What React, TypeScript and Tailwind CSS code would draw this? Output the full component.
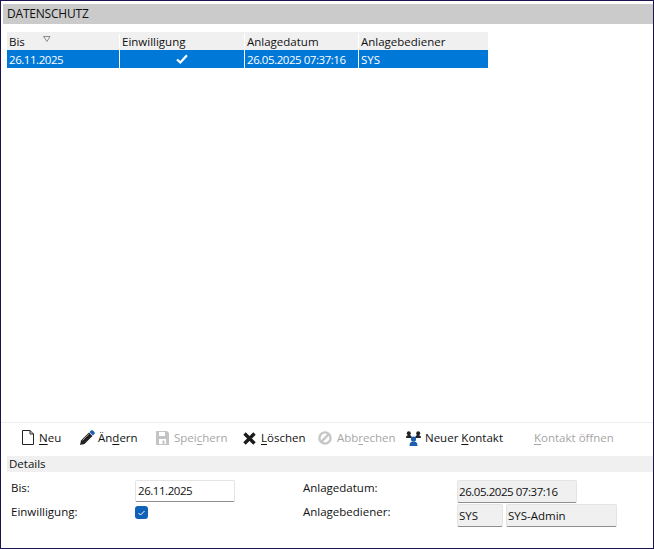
const font = "font-['Open_Sans','Noto_Sans',sans-serif]";
const dateText = "tracking-[-0.45px]";

const NewIcon = () => (
    <svg width="14" height="16" viewBox="0 0 14 16" fill="none">
        <path d="M1.5 .5H9L12.5 4V14.5H1.5Z M9 .5V4H12.5" fill="#fff" stroke="#222" strokeWidth="1" />
    </svg>
);

const PencilIcon = () => (
    <svg width="16" height="16" viewBox="0 0 16 16">
        <path d="M1 15L2 10.5L10 2.5L13.5 6L5.5 14Z" fill="#222" />
        <path d="M10.5 2L12 .6C12.6 0 13.3 0 13.9.6L15.4 2.1C16 2.7 16 3.4 15.4 4L14 5.5Z" fill="#1d5fae" />
        <path d="M3.5 10.5L10 4" stroke="#8f8f8f" strokeWidth="1" />
    </svg>
);

const SaveIcon = () => (
    <svg width="13" height="14" viewBox="0 0 13 14">
        <path d="M0 0H11L13 2V14H0Z" fill="#c4c4c4" />
        <path d="M3 1H9V5H3Z M3 8H10V13H3Z" fill="#fff" />
        <path d="M6.5 9.5H8.5V13H6.5Z" fill="#c4c4c4" />
    </svg>
);

const DeleteIcon = () => (
    <svg width="13" height="13" viewBox="0 0 13 13">
        <path d="M1.5 1.5L11.5 11.5M11.5 1.5L1.5 11.5" stroke="#1c1c1c" strokeWidth="3.4" />
    </svg>
);

const CancelIcon = () => (
    <svg width="14" height="14" viewBox="0 0 14 14" fill="none">
        <circle cx="7" cy="7" r="5.6" stroke="#c6c6c6" strokeWidth="2.4" />
        <path d="M3.2 10.8L10.8 3.2" stroke="#c6c6c6" strokeWidth="2.4" />
    </svg>
);

const ContactIcon = () => (
    <svg width="15" height="15" viewBox="0 0 15 15">
        <path d="M2.5 3L7.5 9L12.5 3" fill="none" stroke="#1d5fae" strokeWidth="1.2" />
        <circle cx="2.8" cy="2.2" r="2" fill="#222" />
        <circle cx="12.2" cy="2.2" r="2" fill="#222" />
        <path d="M0 7C0 5 1 4 2.8 4S5.5 5 5.5 7Z M9.5 7C9.5 5 10.5 4 12.2 4S15 5 15 7Z" fill="#222" />
        <circle cx="7.5" cy="8" r="2.6" fill="#1d5fae" />
        <path d="M3.5 15C3.5 11.5 5 10.4 7.5 10.4S11.5 11.5 11.5 15Z" fill="#1d5fae" />
    </svg>
);

const Key = ({ before, k, after }: { before?: string; k: string; after?: string }) => (
    <span>
        {before}
        <span className="underline underline-offset-2">{k}</span>
        {after}
    </span>
);

const tools = [
    { icon: <NewIcon />, before: "", k: "N", after: "eu", cls: "w-[58px] gap-[4px] text-[#111]" },
    { icon: <PencilIcon />, before: "Än", k: "d", after: "ern", cls: "w-[77px] gap-[3px] text-[#111]" },
    { icon: <SaveIcon />, before: "Spei", k: "c", after: "hern", cls: "w-[87px] gap-[5px] text-[#a6a6a6]" },
    { icon: <DeleteIcon />, before: "", k: "L", after: "öschen", cls: "w-[75px] gap-[5px] text-[#111]" },
    { icon: <CancelIcon />, before: "Abb", k: "r", after: "echen", cls: "w-[88px] gap-[5px] text-[#a6a6a6]" },
    { icon: <ContactIcon />, before: "Neuer ", k: "K", after: "ontakt", cls: "w-[128px] gap-1 text-[#111]" },
    { icon: null, before: "", k: "K", after: "ontakt öffnen", cls: "text-[#a6a6a6]" },
];

const Field = ({ value, className }: { value: string; className: string }) => (
    <div className={`h-[23px] flex items-center px-[1px] bg-[#f0f0f0] border border-[#e4e4e4] border-b-[#8e8e8e] rounded-[2px] text-[#111] whitespace-nowrap ${className}`}>
        {value}
    </div>
);

export default function App() {
    return (
        <div className={`${font} w-[654px] h-[549px] bg-white border border-[#1c1450] flex flex-col text-[11.5px] leading-none text-[#111] overflow-hidden`}>
            <div className="mt-[3px] ml-[2px] h-[20px] bg-[#cbcbcb] flex items-center pl-[4px] shrink-0 text-[12px] tracking-[-0.2px]">DATENSCHUTZ</div>

            <div className="flex-1 pt-[8px] pl-[6px]">
                <div className="w-[481px]">
                    <div className="flex h-[18px] pt-[2px] bg-[#f0f0f0] items-center">
                        <div className="w-[113px] pl-[2px] h-full flex items-center relative border-r border-white">
                            Bis
                            <svg className="absolute left-[36px] top-[2px]" width="8" height="6" viewBox="0 0 8 6" fill="none">
                                <path d="M.5 .5H7L4 5.5Z" stroke="#8a8a8a" strokeWidth="1" />
                            </svg>
                        </div>
                        <div className="w-[125px] pl-[2px] h-full flex items-center border-r border-white">Einwilligung</div>
                        <div className="w-[114px] pl-[2px] h-full flex items-center border-r border-white">Anlagedatum</div>
                        <div className="flex-1 pl-[2px] h-full flex items-center">Anlagebediener</div>
                    </div>
                    <div className="flex h-[18px] bg-[#0078d7] items-center text-white whitespace-nowrap">
                        <div className={`w-[113px] pl-[2px] pt-[2px] h-full flex items-center border-r border-white ${dateText}`}>26.11.2025</div>
                        <div className="w-[125px] h-full flex items-center justify-center border-r border-white">
                            <svg width="12" height="10" viewBox="0 0 12 10" fill="none">
                                <path d="M1 5.5L4.3 8.5L11 1.2" stroke="#fff" strokeWidth="2.2" />
                            </svg>
                        </div>
                        <div className={`w-[114px] pl-[2px] pt-[2px] h-full flex items-center border-r border-white ${dateText}`}>26.05.2025 07:37:16</div>
                        <div className="flex-1 pl-[2px] pt-[2px] h-full flex items-center">SYS</div>
                    </div>
                </div>
            </div>

            <div className="h-[34px] shrink-0 border-t border-[#eeeeee] flex items-center pl-[20px] pb-[3px]">
                {tools.map((t) => (
                    <div key={t.k + t.after} className={`flex items-center ${t.cls}`}>
                        {t.icon}
                        <Key before={t.before} k={t.k} after={t.after} />
                    </div>
                ))}
            </div>

            <div className="ml-[6px] h-[16px] shrink-0 bg-[#f0f0f0] flex items-center pl-[2px]">Details</div>

            <div className="h-[76px] shrink-0 pt-[8px] pl-[10px] flex">
                <div className="w-[124px] flex flex-col">
                    <div className="h-[24px] pt-[2px]">Bis:</div>
                    <div className="pt-[2px]">Einwilligung:</div>
                </div>
                <div className="w-[168px] flex flex-col">
                    <div className={`w-[100px] h-[22px] flex items-center px-[2px] bg-white border border-[#e4e4e4] border-b-[#8e8e8e] rounded-[2px] ${dateText}`}>26.11.2025</div>
                    <div className="mt-[4px] w-[13px] h-[13px] rounded-[3px] bg-[#0f62b8] flex items-center justify-center">
                        <svg width="9" height="8" viewBox="0 0 9 8" fill="none">
                            <path d="M1.5 4L3.5 6L7.5 2" stroke="#fff" strokeWidth="1" />
                        </svg>
                    </div>
                </div>
                <div className="w-[154px] flex flex-col">
                    <div className="h-[24px] pt-[2px]">Anlagedatum:</div>
                    <div className="pt-[2px]">Anlagebediener:</div>
                </div>
                <div className="flex flex-col gap-[1px]">
                    <Field value="26.05.2025 07:37:16" className={`w-[120px] ${dateText}`} />
                    <div className="flex gap-[3px]">
                        <Field value="SYS" className="w-[46px]" />
                        <Field value="SYS-Admin" className="w-[111px]" />
                    </div>
                </div>
            </div>
        </div>
    );
}
